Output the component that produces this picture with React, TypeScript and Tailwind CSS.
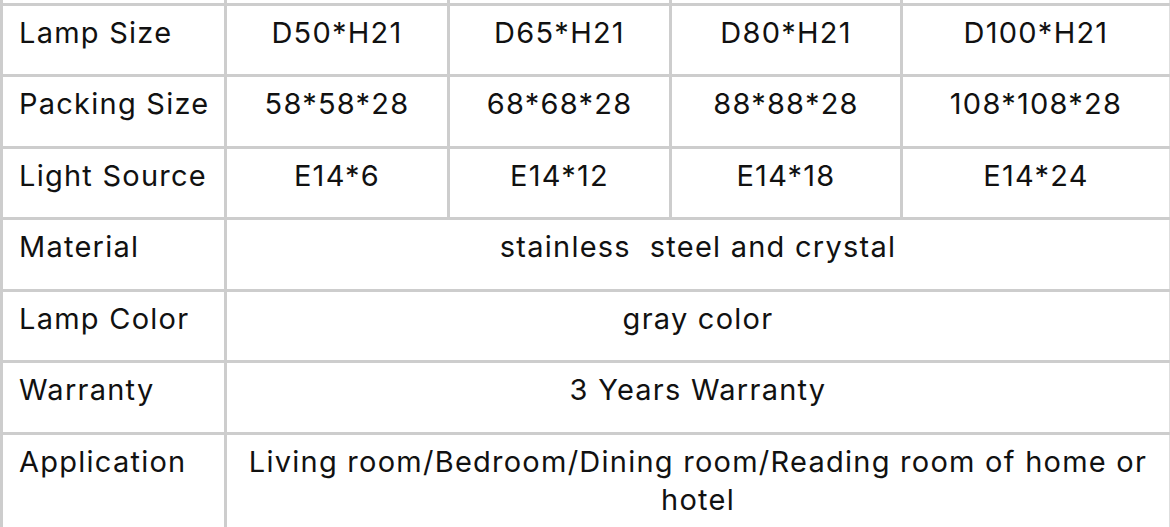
import React from "react";

const B = "border-[#cdcdcd]";

type Cell = { text: React.ReactNode; w: string; first?: boolean };

function Row({ h, cells }: { h: string; cells: Cell[] }) {
  return (
    <div className={`flex border-t-[3px] ${B}`}>
      {cells.map((c, i) => (
        <div
          key={i}
          className={`${c.w} ${h} shrink-0 border-l-[3px] ${B} pt-[8px] leading-[38px] ${
            c.first ? "pl-[16px] text-left" : "text-center"
          }`}
        >
          {c.text}
        </div>
      ))}
      <div className="w-[1px] shrink-0 bg-[#dedede]" />
    </div>
  );
}

export default function App() {
  const W = ["w-[224px]", "w-[223px]", "w-[222px]", "w-[231px]", "w-[269px]"];
  const merged = "w-[945px]";
  return (
    <div
      className="w-[1170px] h-[527px] overflow-hidden bg-white text-[29px] text-[#111] tracking-[0.043em]"
      style={{ fontFamily: "Inter, 'Liberation Sans', sans-serif" }}
    >
      <div className="flex h-[3px]">
        {W.map((w, i) => (
          <div key={i} className={`${w} shrink-0 border-l-[3px] ${B}`} />
        ))}
        <div className="w-[1px] shrink-0 bg-[#dedede]" />
      </div>
      <Row
        h="h-[68px]"
        cells={[
          { text: "Lamp Size", w: W[0], first: true },
          { text: "D50*H21", w: W[1] },
          { text: "D65*H21", w: W[2] },
          { text: "D80*H21", w: W[3] },
          { text: "D100*H21", w: W[4] },
        ]}
      />
      <Row
        h="h-[69px]"
        cells={[
          { text: "Packing Size", w: W[0], first: true },
          { text: "58*58*28", w: W[1] },
          { text: "68*68*28", w: W[2] },
          { text: "88*88*28", w: W[3] },
          { text: "108*108*28", w: W[4] },
        ]}
      />
      <Row
        h="h-[68px]"
        cells={[
          { text: "Light Source", w: W[0], first: true },
          { text: "E14*6", w: W[1] },
          { text: "E14*12", w: W[2] },
          { text: "E14*18", w: W[3] },
          { text: "E14*24", w: W[4] },
        ]}
      />
      <Row
        h="h-[69px]"
        cells={[
          { text: "Material", w: W[0], first: true },
          { text: "stainless\u00a0 steel and crystal", w: merged },
        ]}
      />
      <Row
        h="h-[68px]"
        cells={[
          { text: "Lamp Color", w: W[0], first: true },
          { text: "gray color", w: merged },
        ]}
      />
      <Row
        h="h-[69px]"
        cells={[
          { text: "Warranty", w: W[0], first: true },
          { text: "3 Years Warranty", w: merged },
        ]}
      />
      <Row
        h="h-[100px]"
        cells={[
          { text: "Application", w: W[0], first: true },
          {
            text: (
              <>
                Living room/Bedroom/Dining room/Reading room of home or
                <br />
                hotel
              </>
            ),
            w: merged,
          },
        ]}
      />
    </div>
  );
}
